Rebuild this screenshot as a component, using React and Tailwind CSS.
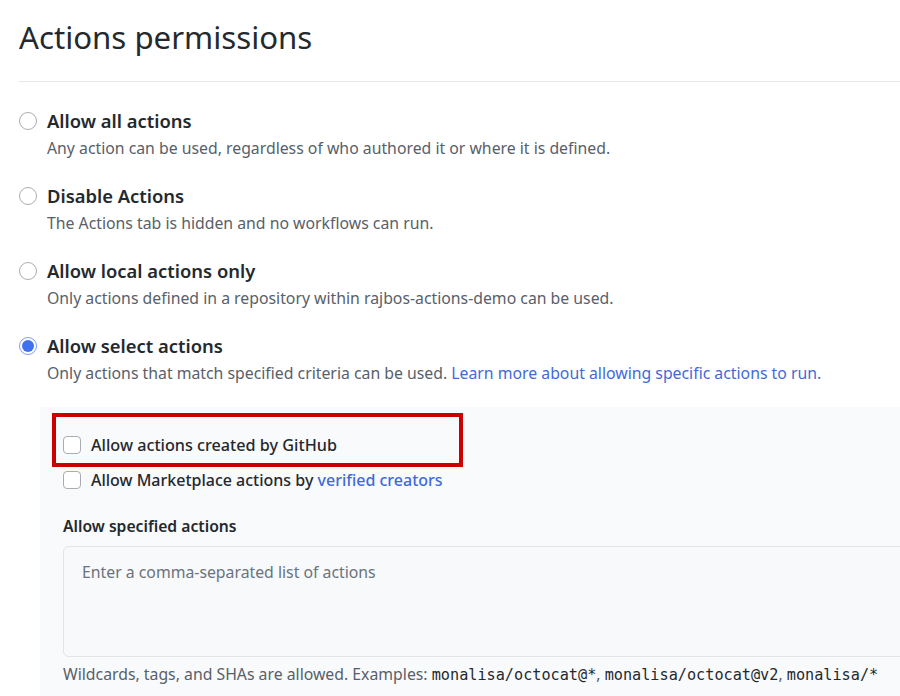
import React from "react";

const font = { fontFamily: '"Noto Sans", "Open Sans", sans-serif' };
const mono = { fontFamily: '"DejaVu Sans Mono", monospace' };

function Radio({ checked }) {
  if (checked) {
    return (
      <span className="w-[18px] h-[18px] rounded-full border border-[#7f9ef2] flex items-center justify-center shrink-0 bg-white">
        <span className="w-[12px] h-[12px] rounded-full bg-[#3f71f0]" />
      </span>
    );
  }
  return <span className="w-[18px] h-[18px] rounded-full border border-[#a9adb3] shrink-0 bg-white" />;
}

function Option({ title, desc, checked }) {
  return (
    <div className="flex flex-col">
      <div className="flex items-center gap-[10px] h-[26px]">
        <Radio checked={checked} />
        <span className="text-[18.4px] font-semibold text-[#24292e] leading-[26px]">{title}</span>
      </div>
      <div className="pl-[28px] text-[15.8px] text-[#586069] leading-[24px] mt-[2px] whitespace-nowrap">{desc}</div>
    </div>
  );
}

function Checkbox() {
  return <span className="w-[18px] h-[18px] rounded-[4px] border border-[#a9adb3] bg-white shrink-0" />;
}

export default function App() {
  return (
    <div className="w-[900px] h-[696px] overflow-hidden bg-white" style={font}>
      <div className="pl-[19px]">
        <h1 className="text-[31.2px] font-normal text-[#24292e] leading-[44px] pt-[15px] pb-[22px] border-b border-[#e4e6e9] w-[1000px]">
          Actions permissions
        </h1>
        <div className="flex flex-col gap-[23px] pt-[26px]">
          <Option title="Allow all actions" desc="Any action can be used, regardless of who authored it or where it is defined." />
          <Option title="Disable Actions" desc="The Actions tab is hidden and no workflows can run." />
          <Option title="Allow local actions only" desc="Only actions defined in a repository within rajbos-actions-demo can be used." />
          <Option
            checked
            title="Allow select actions"
            desc={
              <>
                Only actions that match specified criteria can be used.{" "}
                <span className="text-[#3f6ad8]">Learn more about allowing specific actions to run.</span>
              </>
            }
          />
        </div>
        <div className="ml-[21px] mt-[22px] bg-[#f9fafb] w-[1000px] h-[400px] pl-[12px] pt-[6px]">
          <div className="border-[4px] border-[#cc0000] w-[411px] h-[54px] flex items-center pl-[7px] pt-[10px] gap-[10px]">
            <Checkbox />
            <span className="text-[16.2px] font-medium text-[#24292e]">Allow actions created by GitHub</span>
          </div>
          <div className="flex items-center gap-[10px] pl-[11px] h-[24px] mt-[1px]">
            <Checkbox />
            <span className="text-[16px] font-medium text-[#24292e]">
              Allow Marketplace actions by <span className="text-[#3f6ad8]">verified creators</span>
            </span>
          </div>
          <div className="pl-[11px] mt-[22px] text-[15.7px] font-semibold text-[#24292e] leading-[24px]">
            Allow specified actions
          </div>
          <div className="ml-[11px] mt-[8px] h-[111px] border border-[#e1e4e8] rounded-[6px] bg-[#f8f9fb] pl-[18px] pt-[13px] text-[15.8px] text-[#6a737d] leading-[24px]">
            Enter a comma-separated list of actions
          </div>
          <div className="pl-[11px] mt-[5px] text-[15.8px] text-[#586069] leading-[24px] whitespace-nowrap">
            Wildcards, tags, and SHAs are allowed. Examples:{" "}
            <span className="text-[#24292e] text-[15.2px]" style={mono}>monalisa/octocat@*</span>,{" "}
            <span className="text-[#24292e] text-[15.2px]" style={mono}>monalisa/octocat@v2</span>,{" "}
            <span className="text-[#24292e] text-[15.2px]" style={mono}>monalisa/*</span>
          </div>
        </div>
      </div>
    </div>
  );
}
